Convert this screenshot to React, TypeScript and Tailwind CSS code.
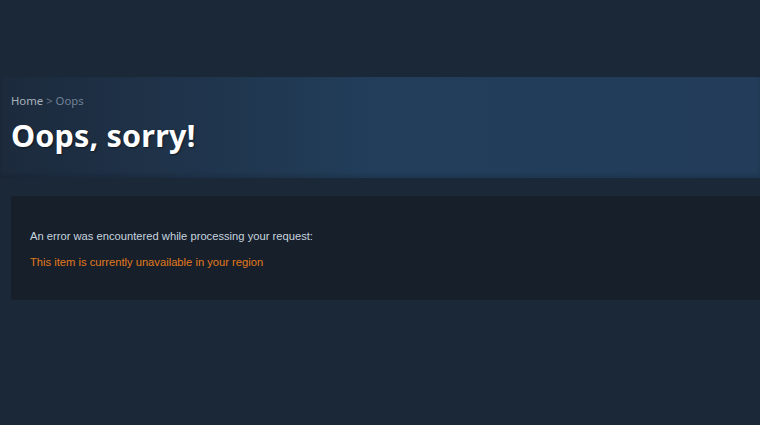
export default function App() {
  return (
    <div className="min-h-[425px] w-full overflow-hidden bg-[#1b2838] pt-[77px]">
      {/* Page header band */}
      <div className="h-[101px] bg-gradient-to-r from-[#1c2a3c] via-[#223e5b] via-50% to-[#223c59] shadow-[inset_0_-3px_4px_rgba(0,0,0,0.12)]">
        <div className="px-[11px] pt-[16px]">
          <div className="font-['Noto_Sans',sans-serif] text-[11.3px] leading-[16px] text-[#8f98a0]">
            <span className="text-[#a8b2bb]">Home</span>
            <span className="mx-[3px] text-[#6d7b89]">&gt;</span>
            <span className="text-[#6f8094]">Oops</span>
          </div>
          <h1 className="mt-[6px] font-['Noto_Sans',sans-serif] text-[30.5px] font-bold leading-[40px] tracking-[0.2px] text-white [text-shadow:1px_1px_2px_rgba(0,0,0,0.45)]">
            Oops, sorry!
          </h1>
        </div>
      </div>

      {/* Error box */}
      <div className="ml-[11px] mt-[18px] h-[104px] bg-[#171f2b] px-[19px] pt-[32px] font-['Liberation_Sans',sans-serif] text-[11.2px]">
        <p className="leading-[16px] text-[#c6d4df]">An error was encountered while processing your request:</p>
        <p className="mt-[10px] leading-[16px] text-[#e27a1c]">This item is currently unavailable in your region</p>
      </div>
    </div>
  )
}
